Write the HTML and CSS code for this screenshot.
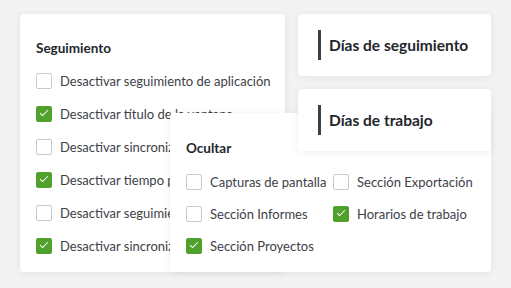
FILE: index.html
```html
<!DOCTYPE html>
<html lang="es">
<head>
    <meta charset="UTF-8">
    <meta name="viewport" content="width=device-width, initial-scale=1.0">
    <title>Ajustes de seguimiento</title>
    <link rel="stylesheet" href="styles.css">
</head>
<body>
    <div class="board">
        <!-- Tracking options -->
        <div class="card tracking">
            <h3 class="card-title">Seguimiento</h3>
            <div class="options">
                <label class="option"><span class="box"></span>Desactivar seguimiento de aplicación</label>
                <label class="option"><span class="box checked"></span>Desactivar título de la ventana</label>
                <label class="option"><span class="box"></span>Desactivar sincronización de datos</label>
                <label class="option"><span class="box checked"></span>Desactivar tiempo para inactividad</label>
                <label class="option"><span class="box"></span>Desactivar seguimiento de URL</label>
                <label class="option"><span class="box checked"></span>Desactivar sincronización de capturas</label>
            </div>
        </div>

        <!-- Side cards -->
        <div class="side">
            <div class="card tab"><span class="tab-bar"></span>Días de seguimiento</div>
            <div class="card tab"><span class="tab-bar"></span>Días de trabajo</div>
        </div>

        <div class="card hide">
            <h3 class="card-title">Ocultar</h3>
            <div class="hide-grid">
                <label class="option"><span class="box"></span>Capturas de pantalla</label>
                <label class="option"><span class="box"></span>Sección Exportación</label>
                <label class="option"><span class="box"></span>Sección Informes</label>
                <label class="option"><span class="box checked"></span>Horarios de trabajo</label>
                <label class="option"><span class="box checked"></span>Sección Proyectos</label>
            </div>
        </div>
    </div>
</body>
</html>
```

FILE: styles.css
```css
body {
    margin: 0;
    padding: 0;
    font-family: Lato, "Noto Sans", sans-serif;
    background: #f3f3f3;
    color: #3d4148;
}

.board {
    position: relative;
    display: flex;
    gap: 13px;
    padding: 14px 20px;
    height: 288px;
    box-sizing: border-box;
}

.card {
    background: #fff;
    border-radius: 4px;
    box-shadow: 0 1px 8px rgba(0, 0, 0, 0.07);
}

.card-title {
    margin: 0;
    font-size: 13.5px;
    font-weight: 700;
    color: #23262b;
}

/* Left card */
.tracking {
    width: 265px;
    height: 258px;
    box-sizing: border-box;
    padding: 26px 16px 0;
    overflow: hidden;
}

.options {
    display: flex;
    flex-direction: column;
    gap: 17px;
    margin-top: 17px;
}

.option {
    display: flex;
    align-items: center;
    gap: 8px;
    font-size: 13px;
    line-height: 16px;
    white-space: nowrap;
}

.box {
    width: 14px;
    height: 14px;
    flex-shrink: 0;
    border: 1px solid #c9c9c9;
    border-radius: 2px;
    background: #fff;
    position: relative;
}

.box.checked {
    background: #4fa12b;
    border-color: #4fa12b;
}

.box.checked::after {
    content: "";
    position: absolute;
    left: 3px;
    top: 3px;
    width: 7px;
    height: 3px;
    border-left: 1.5px solid #fff;
    border-bottom: 1.5px solid #fff;
    transform: rotate(-45deg);
}

/* Right cards */
.side {
    display: flex;
    flex-direction: column;
    gap: 13px;
}

.tab {
    position: relative;
    z-index: 2;
    width: 193px;
    height: 62px;
    box-sizing: border-box;
    padding: 0 20px;
    display: flex;
    align-items: center;
    gap: 8px;
    font-size: 15.5px;
    font-weight: 700;
    color: #23262b;
}

.tab-bar {
    width: 3px;
    height: 30px;
    background: #3a4049;
}

/* Popup */
.hide {
    position: absolute;
    left: 170px;
    top: 113px;
    width: 321px;
    height: 159px;
    box-sizing: border-box;
    padding: 27px 16px 0;
    z-index: 1;
}

.hide-grid {
    display: grid;
    grid-template-columns: 147px auto;
    row-gap: 16px;
    margin-top: 18px;
}
```
